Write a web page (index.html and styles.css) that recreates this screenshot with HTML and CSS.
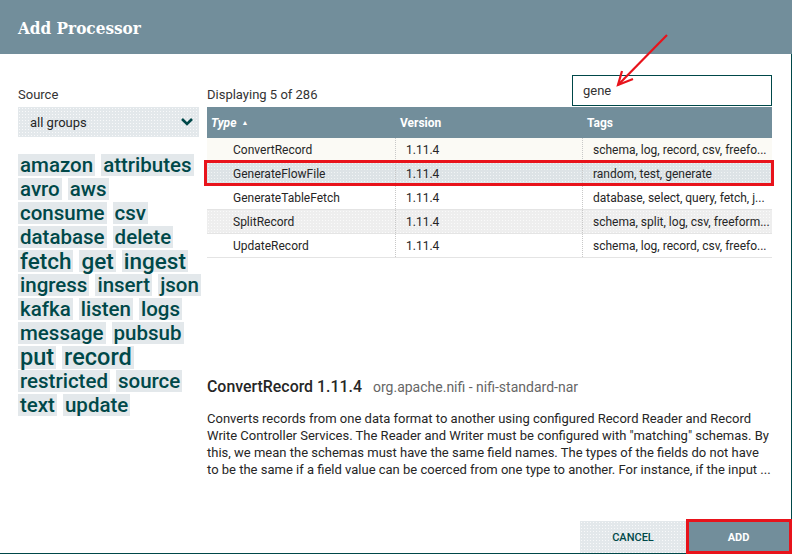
FILE: index.html
```html
<!DOCTYPE html>
<html>
<head>
<meta charset="utf-8">
<link rel="stylesheet" href="styles.css">
</head>
<body>
<div class="dialog">
  <div class="header"><h1 class="title">Add Processor</h1></div>
  <div class="main">
    <div class="left">
      <div class="toprow"><span class="label">Source</span></div>
      <div class="select dotted">
        <span>all groups</span>
        <svg class="chev" width="14" height="10" viewBox="0 0 14 10"><polyline points="2,2 7,7 12,2" fill="none" stroke="#004849" stroke-width="2.6"/></svg>
      </div>
      <div class="cloud">
        <div class="tagrow"><span class="tag">amazon</span><span class="tag">attributes</span></div>
        <div class="tagrow"><span class="tag">avro</span><span class="tag">aws</span></div>
        <div class="tagrow"><span class="tag">consume</span><span class="tag">csv</span></div>
        <div class="tagrow"><span class="tag">database</span><span class="tag">delete</span></div>
        <div class="tagrow"><span class="tag big">fetch</span><span class="tag big">get</span><span class="tag big">ingest</span></div>
        <div class="tagrow"><span class="tag">ingress</span><span class="tag">insert</span><span class="tag">json</span></div>
        <div class="tagrow"><span class="tag">kafka</span><span class="tag">listen</span><span class="tag">logs</span></div>
        <div class="tagrow"><span class="tag">message</span><span class="tag">pubsub</span></div>
        <div class="tagrow"><span class="tag bigger">put</span><span class="tag bigger">record</span></div>
        <div class="tagrow"><span class="tag">restricted</span><span class="tag">source</span></div>
        <div class="tagrow"><span class="tag">text</span><span class="tag">update</span></div>
      </div>
    </div>
    <div class="right">
      <div class="toprow split">
        <span class="label">Displaying 5 of 286</span>
        <div class="search">gene</div>
      </div>
      <div class="tablewrap">
        <div class="grid">
          <div class="row head">
            <div class="cell h type-h">Type <span class="sort">&#9650;</span></div>
            <div class="cell h">Version</div>
            <div class="cell h">Tags</div>
          </div>
          <div class="row r1">
            <div class="cell type">ConvertRecord</div>
            <div class="cell">1.11.4</div>
            <div class="cell">schema, log, record, csv, freefo...</div>
          </div>
          <div class="row r2 marked">
            <div class="cell type">GenerateFlowFile</div>
            <div class="cell">1.11.4</div>
            <div class="cell">random, test, generate</div>
          </div>
          <div class="row">
            <div class="cell type">GenerateTableFetch</div>
            <div class="cell">1.11.4</div>
            <div class="cell">database, select, query, fetch, j...</div>
          </div>
          <div class="row r4">
            <div class="cell type">SplitRecord</div>
            <div class="cell">1.11.4</div>
            <div class="cell">schema, split, log, csv, freeform...</div>
          </div>
          <div class="row">
            <div class="cell type">UpdateRecord</div>
            <div class="cell">1.11.4</div>
            <div class="cell">schema, log, record, csv, freefo...</div>
          </div>
        </div>
      </div>
      <div class="desc-title"><span class="dname">ConvertRecord 1.11.4</span><span class="dbundle">org.apache.nifi - nifi-standard-nar</span></div>
      <p class="desc">Converts records from one data format to another using configured Record Reader and Record<br>Write Controller Services. The Reader and Writer must be configured with "matching" schemas. By<br>this, we mean the schemas must have the same field names. The types of the fields do not have<br>to be the same if a field value can be coerced from one type to another. For instance, if the input ...</p>
    </div>
  </div>
  <div class="footer">
    <div class="btn cancel dotted">CANCEL</div>
    <div class="btn add">ADD</div>
  </div>
  <svg class="arrow" width="793" height="554" viewBox="0 0 793 554">
    <line x1="667" y1="35" x2="618" y2="85" stroke="#e8131b" stroke-width="2.2"/>
    <polyline points="622,71 618,85 633,79" fill="none" stroke="#e8131b" stroke-width="2.2"/>
  </svg>
</div>
</body>
</html>
```
FILE: styles.css
```css
* { box-sizing: border-box; }
html, body { margin: 0; padding: 0; background: #fff; }
body { font-family: Roboto, "Liberation Sans", sans-serif; color: #262626; }

.dialog {
  position: relative;
  width: 792px;
  height: 554px;
  border-right: 1px solid #004849;
  border-bottom: 1px solid #004849;
  display: flex;
  flex-direction: column;
}

.header {
  height: 54px;
  background: #728e9b;
  margin-right: -1px;
  display: flex;
  align-items: center;
  padding-left: 18px;
}
.title {
  margin: 0;
  font-family: "DejaVu Serif", "Liberation Serif", serif;
  font-stretch: condensed;
  font-weight: bold;
  font-size: 17px;
  color: #fff;
  padding-top: 2px;
}

.main {
  height: 467px;
  display: flex;
  gap: 8px;
  padding: 0 19px 0 18px;
}
.left { width: 181px; display: flex; flex-direction: column; }
.right { width: 565px; display: flex; flex-direction: column; }

.toprow { height: 53px; display: flex; align-items: flex-end; }
.toprow.split { justify-content: space-between; }
.label { font-size: 13px; line-height: 16px; margin-bottom: 4px; color: #333; }

.dotted {
  background-color: #e3e8eb;
  background-image: radial-gradient(circle, rgba(255,255,255,0.75) 0.55px, transparent 0.9px);
  background-size: 3px 3px;
}

.select {
  height: 30px;
  display: flex;
  align-items: center;
  justify-content: space-between;
  padding: 0 5px 0 12px;
  font-size: 13px;
  color: #262626;
}
.chev { display: block; }

.cloud { margin-top: 17px; display: flex; flex-direction: column; gap: 2px; }
.tagrow { display: flex; gap: 6px; height: 22px; align-items: center; }
.tag {
  background: #e3e8eb;
  color: #004849;
  font-weight: 500;
  font-size: 20.5px;
  line-height: 22px;
  height: 22px;
  padding: 0 2px;
  white-space: nowrap;
}
.tag.big { font-size: 22.5px; }
.tag.bigger { font-size: 23.5px; height: 23px; line-height: 23px; }

.search {
  width: 200px;
  height: 31px;
  margin-bottom: 1px;
  border: 1px solid #004849;
  font-size: 13px;
  line-height: 29px;
  padding-left: 10px;
  color: #333;
}

.tablewrap { height: 270px; }
.grid { display: flex; flex-direction: column; }
.row {
  display: grid;
  grid-template-columns: 189px 187px 189px;
  height: 24px;
  border-bottom: 1px solid #e4e4e4;
  font-size: 12px;
  color: #262626;
  position: relative;
}
.row.head { height: 31px; background: #728e9b; border-bottom: none; }
.row.r1 { background: #fbfaf5; }
.row.r2 { background-color: #dde3e6; background-image: radial-gradient(circle, rgba(255,255,255,0.6) 0.55px, transparent 0.9px); background-size: 3px 3px; }
.row.r4 { background-color: #eeeeee; background-image: radial-gradient(circle, rgba(255,255,255,0.7) 0.55px, transparent 0.9px); background-size: 3px 3px; }
.row.marked::after {
  content: "";
  position: absolute;
  left: -3px; right: -2px; top: -2px; bottom: -1px;
  border: 3px solid #e8131b;
}
.cell {
  display: flex;
  align-items: center;
  padding-left: 10px;
  white-space: nowrap;
  overflow: hidden;
  border-right: 1px dotted #c8c8c8;
}
.cell:last-child { border-right: none; }
.cell.type { padding-left: 26px; }
.cell.h {
  color: #fff;
  font-weight: bold;
  font-size: 12px;
  padding-left: 4px;
  border-right: none;
}
.type-h { font-style: italic; }
.sort { font-size: 7px; font-style: normal; margin-left: 5px; margin-top: 1px; }

.desc-title { height: 20px; line-height: 20px; display: flex; align-items: baseline; }
.dname { font-size: 15.9px; font-weight: 500; color: #262626; }
.dbundle { font-size: 14px; color: #666; margin-left: 11px; }
.desc {
  margin: 13px 0 0 0;
  font-size: 13px;
  line-height: 17px;
  color: #262626;
  white-space: nowrap;
}

.footer {
  height: 32px;
  display: flex;
  justify-content: flex-end;
}
.btn {
  display: flex;
  align-items: center;
  justify-content: center;
  font-size: 11px;
  height: 32px;
}
.cancel { width: 106px; color: #004849; font-weight: 500; }
.add {
  width: 105px;
  background: #728e9b;
  color: #fff;
  font-weight: bold;
  position: relative;
}
.add::after {
  content: "";
  position: absolute;
  left: 0; right: -1px; top: -2px; bottom: -1px;
  border: 3px solid #e8131b;
}

.arrow { position: absolute; left: 0; top: 0; pointer-events: none; }
```
